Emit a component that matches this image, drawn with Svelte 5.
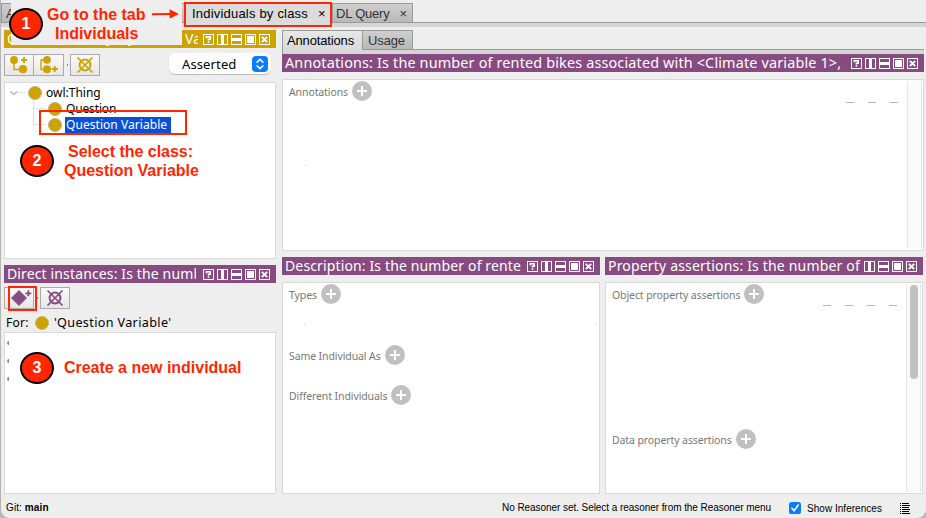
<script>
  const full = ['help', 'vsplit', 'hsplit', 'max', 'close'];
  const noHelp = full.slice(1);
</script>

{#snippet winIcons(kinds)}
  <span class="wins">
    {#each kinds as k}
      <svg width="11" height="11" viewBox="0 0 11 11" fill="none" stroke="#fff">
        <rect x=".5" y=".5" width="10" height="10" />
        {#if k === 'help'}
          <path d="M3.4 4.2V2.8H7.2V5.2H5.5v1.3M5.5 7.3v1.5" stroke-width="1.6" />
        {:else if k === 'vsplit'}
          <path d="M5.5 0v11" stroke-width="3" />
        {:else if k === 'hsplit'}
          <path d="M0 5.5h11" stroke-width="3" />
        {:else if k === 'max'}
          <rect x="2.5" y="2.5" width="6" height="6" fill="#fff" />
        {:else}
          <path d="M2.8 2.8l5.4 5.4M8.2 2.8l-5.4 5.4" stroke-width="1.9" />
        {/if}
      </svg>
    {/each}
  </span>
{/snippet}

{#snippet title(text, cls, kinds)}
  <div class="title {cls}">
    <span class="ttext">{text}</span>
    {@render winIcons(kinds)}
  </div>
{/snippet}

{#snippet plus()}
  <svg class="plus" width="20" height="20" viewBox="0 0 20 20">
    <circle cx="10" cy="10" r="10" fill="#c0c0c0" />
    <path d="M10 5v10M5 10h10" stroke="#fff" stroke-width="2" />
  </svg>
{/snippet}

{#snippet crossed(color)}
  <svg width="28" height="20" viewBox="0 0 28 20" fill="none" stroke={color}>
    <circle cx="14" cy="10" r="5.4" stroke-width="2" />
    <path d="M6.5 2.5l15 15M21.5 2.5l-15 15" stroke-width="1.7" />
  </svg>
{/snippet}

<div class="app">
  <div class="maintabs">
    <div class="tab first">A</div>
    <div class="tab current">Individuals by class <b>×</b></div>
    <div class="tab query">DL Query <b>×</b></div>
  </div>

  <div class="body">
    <div class="left">
      <div class="title gold">
        <span class="ttext c">C</span>
        <span class="ttext va">Va</span>
        {@render winIcons(full)}
      </div>
      <div class="tools top">
        <span class="btn">
          <svg width="28" height="20" viewBox="0 0 28 20" fill="#cca300" stroke="#cca300">
            <path d="M9 5v9.5h9" fill="none" stroke-width="1.4" />
            <circle cx="9" cy="5" r="3.9" stroke="none" /><circle cx="18" cy="14.2" r="4.1" stroke="none" />
            <path d="M19 2v6M16 5h6" fill="none" stroke-width="1.8" />
          </svg>
        </span>
        <span class="btn second">
          <svg width="29" height="20" viewBox="0 0 29 20" fill="#cca300" stroke="#cca300">
            <path d="M12 5H7v9.5h6" fill="none" stroke-width="1.4" />
            <circle cx="13" cy="4.8" r="3.9" stroke="none" /><circle cx="13" cy="14.2" r="4" stroke="none" />
            <path d="M20.8 11v6M17.8 14h6" fill="none" stroke-width="1.8" />
          </svg>
        </span>
        <i class="dot"></i>
        <span class="btn">{@render crossed('#cca300')}</span>
        <span class="select">
          Asserted
          <svg width="16" height="16" viewBox="0 0 16 16" fill="none" stroke="#fff" stroke-width="1.5" stroke-linecap="round" stroke-linejoin="round">
            <rect width="16" height="16" rx="4" fill="#0a7dfa" stroke="none" />
            <path d="M5 6.2l3-2.8 3 2.8M5 9.8l3 2.8 3-2.8" />
          </svg>
        </span>
      </div>
      <div class="box tree">
        <div class="node root">
          <svg width="18" height="10" viewBox="0 0 18 10" fill="none">
            <path d="M1.2 3.3l3.5 3.2 3.5-3.2" stroke="#bdbdbd" stroke-width="1.6" />
            <path d="M9 4.5h7" stroke="#dedede" />
          </svg>
          <i class="ball"></i><span>owl:Thing</span>
        </div>
        <div class="node child"><i class="elbow"></i><i class="ball"></i><span class="q">Question</span></div>
        <div class="node child"><i class="elbow"></i><i class="ball"></i><span class="sel">Question Variable</span></div>
      </div>
      {@render title('Direct instances: Is the numb', 'direct', full)}
      <div class="tools low">
        <span class="btn">
          <svg width="28" height="20" viewBox="0 0 28 20">
            <path d="M14 2.2l7.8 7.8-7.8 7.8L6.2 10z" fill="#874b82" stroke="#9b8f9a" stroke-width=".8" />
            <path d="M23.3 2.3v6M20.3 5.3h6" stroke="#874b82" stroke-width="1.8" />
          </svg>
        </span>
        <i class="dot"></i>
        <span class="btn">{@render crossed('#874b82')}</span>
      </div>
      <div class="for"><span>For:</span><i class="ball"></i><span class="fq">'Question Variable'</span></div>
      <div class="box instances"><i></i><i></i><i></i></div>
    </div>

    <div class="right">
      <div class="subtabs">
        <div class="tab sub on">Annotations</div>
        <div class="tab sub">Usage</div>
      </div>
      {@render title('Annotations: Is the number of rented bikes associated with <Climate variable 1>,', 'ann', full)}
      <div class="box annbox">
        <div class="sec"><span>Annotations</span>{@render plus()}</div>
        <span class="marks"><i></i><i></i><i></i></span>
        <i class="speck a"></i>
        <div class="track"></div>
      </div>
      <div class="cols">
        <div class="col">
          {@render title('Description: Is the number of rente', 'dsc', full)}
          <div class="box">
            <div class="sec"><span>Types</span>{@render plus()}</div>
            <div class="sec same"><span>Same Individual As</span>{@render plus()}</div>
            <div class="sec diff"><span>Different Individuals</span>{@render plus()}</div>
            <i class="speck b"></i><i class="speck c2"></i>
          </div>
        </div>
        <div class="col">
          {@render title('Property assertions: Is the number of', 'prp', noHelp)}
          <div class="box">
            <div class="sec"><span>Object property assertions</span>{@render plus()}</div>
            <div class="sec data"><span>Data property assertions</span>{@render plus()}</div>
            <span class="marks"><i></i><i></i><i></i><i></i></span>
            <div class="track"><div class="thumb"></div></div>
          </div>
        </div>
      </div>
    </div>
  </div>

  <div class="footer">
    <span class="git">Git: <b>main</b></span>
    <span class="reason">No Reasoner set. Select a reasoner from the Reasoner menu</span>
    <svg class="check" width="12" height="12" viewBox="0 0 12 12">
      <rect width="12" height="12" rx="2.6" fill="#0a7dfa" />
      <path d="M2.9 6.3l2.2 2.5L9.2 3" fill="none" stroke="#fff" stroke-width="1.6" stroke-linecap="round" />
    </svg>
    <span class="show">Show Inferences</span>
    <svg class="log" width="10" height="11" viewBox="0 0 10 11" stroke="#000" fill="none">
      <path d="M0 .5h1M2 .5h7M0 2.5h1M2 2.5h8M0 4.5h1M2 4.5h7M0 6.5h1M2 6.5h8M0 8.5h1M2 8.5h7M0 10.5h1M2 10.5h8" />
    </svg>
  </div>

  <div class="patch">
    <i class="cut"></i>
    <div class="call go">Go to the tab</div>
    <div class="call ind">Individuals</div>
  </div>
  <svg class="arrow" width="32" height="14" viewBox="0 0 32 14">
    <path d="M1 7.3L20 7" stroke="#ff2600" stroke-width="1.9" /><path d="M18.5 2.2L28 6.9l-9.3 4.7z" fill="#ff2600" />
  </svg>
  <div class="frame f1"></div>
  <div class="frame f2"></div>
  <div class="frame f3"></div>
  <div class="num n1">1</div>
  <div class="num n2">2</div>
  <div class="num n3">3</div>
  <div class="call select-class">Select the class:</div>
  <div class="call qv">Question Variable</div>
  <div class="call create">Create a new individual</div>
</div>

<style>
  :global(body) { margin: 0; background: #b9b9b9; }
  .app, .app * { box-sizing: border-box; }
  .app {
    position: relative; width: 926px; height: 518px; overflow: hidden;
    display: flex; flex-direction: column; background: #eee;
    border-left: 1px solid #b4b4b4; border-radius: 0 0 9px 9px;
    font-family: "Noto Sans", "Open Sans", sans-serif; color: #000; white-space: nowrap;
  }
  i { display: block; font-style: normal; }
  svg { display: block; flex: none; }

  .maintabs { flex: none; display: flex; align-items: flex-end; height: 27px; padding-top: 3px; background: linear-gradient(#eee 22px, #999 22px, #999 23px, #d5d5d5 23px); }
  .tab { font: 13px/19px "Liberation Sans", Arial, sans-serif; border: 1px solid #999; background: linear-gradient(#cfcfcf, #b8b8b8); color: #333; height: 20px; align-self: flex-start; }
  .tab b { font: 13px/20px "Liberation Sans", Arial, sans-serif; }
  .first { width: 184px; padding-left: 4px; }
  .current { width: 147px; height: 24px; padding-left: 6px; background: #dcdcdc; border-bottom: 0; color: #000; letter-spacing: .2px; display: flex; }
  .current b { margin-left: 10px; }
  .query { width: 81px; padding-left: 3px; letter-spacing: -.2px; display: flex; }
  .query b { margin-left: 10px; }

  .body { flex: none; display: flex; gap: 6px; padding-left: 3px; height: 467px; }
  .left { width: 272px; padding-top: 3px; display: flex; flex-direction: column; }
  .right { width: 642px; padding-top: 3px; display: flex; flex-direction: column; }

  .title { flex: none; height: 18px; background: #874b82; color: #fff; display: flex; align-items: center; justify-content: space-between; padding: 0 6px 0 3px; }
  .ttext { font-size: 14px; line-height: 18px; overflow: hidden; height: 18px; letter-spacing: .135px; }
  .wins { display: flex; gap: 3px; flex: none; }
  .gold { background: #cca300; }
  .va { width: 13px; margin-left: auto; margin-right: 5px; }
  .direct .ttext { width: 189px; margin-right: 7px; }
  .dsc .ttext { width: 238px; }
  .prp .ttext { width: 253px; letter-spacing: .18px; }
  .ann .ttext { font-size: 14.4px; letter-spacing: .16px; }

  .tools { flex: none; display: flex; height: 22px; }
  .btn { width: 30px; height: 22px; border: 1px solid #aaa; background: linear-gradient(#fafafa, #e6e6e6); }
  .btn.second { border-left: 0; }
  .dot { width: 1px; height: 2px; background: #888; margin: 10px 2px 0 3px; }
  .top { margin-top: 6px; }
  .low { margin-top: 4px; }
  .select { margin-left: auto; margin-right: 5px; width: 102px; height: 21px; margin-top: -1px; border-radius: 6px; background: #fff; box-shadow: 0 1px 1px #bbb; font-size: 13px; line-height: 21px; letter-spacing: .12px; display: flex; align-items: center; justify-content: space-between; padding: 1px 3px 0 13px; }

  .box { position: relative; flex: 1; background: #fff; border: 1px solid #d9d9d9; min-height: 0; }
  .tree { flex: none; height: 177px; margin: 6px 0 6px; padding-top: 2px; font-size: 12px; }
  .node { height: 16px; line-height: 16px; display: flex; align-items: center; }
  .root { padding-left: 4px; }
  .root span { margin-left: 4px; }
  .ball { flex: none; width: 14px; height: 14px; border-radius: 50%; background: #cca300; border: 1px solid #c4b278; }
  .root .ball { margin-left: 1px; }
  .child { padding-left: 28px; }
  .elbow { flex: none; width: 12px; height: 9px; margin-right: 3px; margin-top: -9px; border: solid #e2e2e2; border-width: 0 0 1px 1px; }
  .child + .child .elbow { height: 16px; margin-top: -16px; }
  .q { margin-left: 4px; letter-spacing: -.15px; }
  .sel { margin-left: 3px; padding-left: 1px; width: 106px; background: #0850d8; color: #fff; letter-spacing: .05px; }

  .for { flex: none; display: flex; align-items: center; height: 19px; margin: 4px 0 0; padding-left: 2px; font-size: 12px; line-height: 19px; letter-spacing: .3px; }
  .for .ball { margin: 0 5px 0 6px; }
  .fq { font-size: 12.6px; letter-spacing: .36px; }
  .instances { padding: 8px 0 0 2px; }
  .instances i { width: 2px; height: 4px; background: #888; border-radius: 2px 0 0 2px; margin-bottom: 14px; }

  .subtabs { flex: none; display: flex; height: 24px; background: linear-gradient(#eee 19px, #999 19px, #999 20px, #d5d5d5 20px); }
  .sub { width: 51px; padding-left: 5px; letter-spacing: -.12px; }
  .sub.on { width: 80px; padding-left: 4px; letter-spacing: -.15px; height: 24px; background: linear-gradient(#e8e8e8, #d5d5d5); border-bottom: 0; border-right: 0; color: #000; }
  .annbox { flex: none; height: 172px; margin: 7px 0 6px; }
  .sec { display: flex; align-items: center; height: 20px; margin: 1px 0 0 6px; font-size: 10.5px; line-height: 20px; letter-spacing: -.1px; color: #777; }
  .plus { margin-left: 4px; }
  .sec span { padding-top: 1px; }
  .same { margin-top: 41px; }
  .diff { margin-top: 20px; }
  .data { margin-top: 125px; }
  .cols { flex: none; display: flex; gap: 5px; height: 237px; }
  .col { width: 318px; display: flex; flex-direction: column; }
  .col .box { margin-top: 7px; }
  .track { position: absolute; right: 1px; top: 1px; bottom: 1px; width: 15px; background: #fafafa; border: solid #e6e6e6; border-width: 0 1px; }
  .thumb { margin: 1px 0 0 3px; width: 8px; height: 94px; border-radius: 4px; background: #c1c1c1; }
  .marks { position: absolute; right: 25px; top: 22px; display: flex; gap: 14px; }
  .marks i { width: 8px; height: 1px; background: #b5b5b5; }
  .speck { position: absolute; width: 2px; height: 1px; background: #ddd; }
  .a { left: 22px; top: 85px; }
  .b { left: 21px; top: 41px; }
  .c2 { right: 2px; top: 41px; }

  .footer { height: 24px; display: flex; align-items: center; padding: 4px 0 0 5px; font: 10px/20px "Liberation Sans", Arial, sans-serif; }
  .git { width: 496px; letter-spacing: .1px; }
  .reason { width: 287px; letter-spacing: -.06px; }
  .check { margin-right: 6px; }
  .show { width: 93px; letter-spacing: .03px; padding-top: 1px; }

  .patch { position: absolute; left: 10px; top: 0; width: 171px; height: 45px; background: #eee; }
  .cut { position: absolute; left: 95px; top: 45px; width: 27px; height: 1px; background: repeating-linear-gradient(90deg, #f3e6b0 0 3px, #cca300 3px 22px); }
  .call { position: absolute; font: bold 16px/18px "Liberation Sans", Arial, sans-serif; color: #ff2600; letter-spacing: -.02px; }
  .go { left: 36px; top: 6px; }
  .ind { left: 44px; top: 25px; }
  .arrow { position: absolute; left: 150px; top: 7px; }
  .frame { position: absolute; border: 2px solid #ff2600; }
  .f1 { left: 183px; top: 2px; width: 148px; height: 25px; }
  .f2 { left: 38px; top: 110px; width: 148px; height: 25px; }
  .f3 { left: 7px; top: 286px; width: 29px; height: 25px; }
  .num { position: absolute; width: 34px; height: 32px; border: 2px solid #000; border-radius: 50%; background: #ff2600; color: #fff; text-align: center; font: bold 16px/28px "Liberation Sans", Arial, sans-serif; }
  .n1 { left: 8px; top: 8px; }
  .n2 { left: 19px; top: 145px; }
  .n3 { left: 19px; top: 352px; }
  .select-class { left: 67px; top: 143px; }
  .qv { left: 63px; top: 162px; }
  .create { left: 63px; top: 359px; }
</style>
